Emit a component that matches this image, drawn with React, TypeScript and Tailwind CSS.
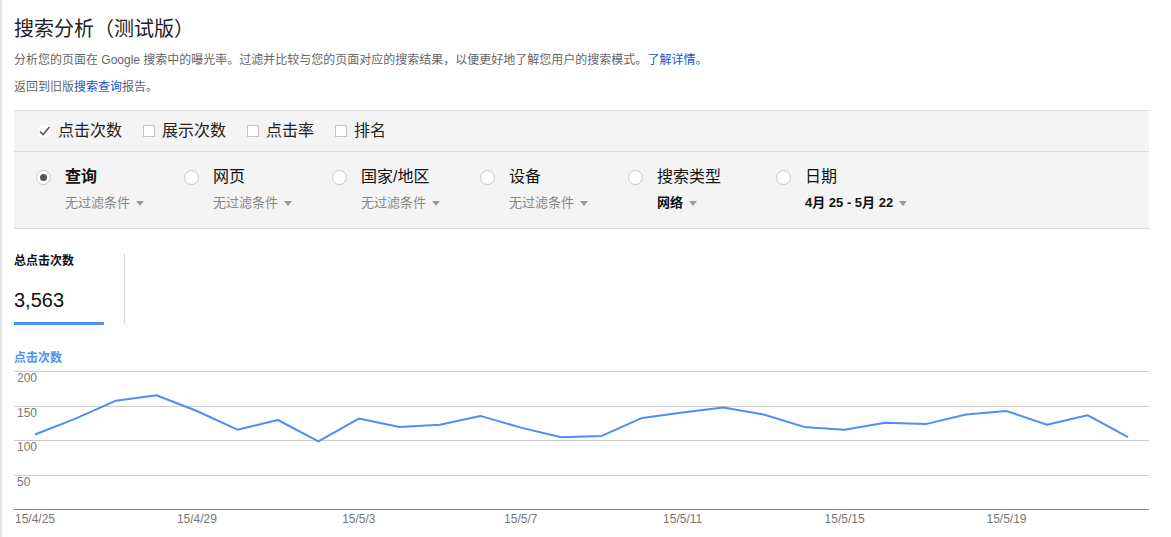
const clicks = [108, 131, 157, 165, 142, 115, 129, 98, 131, 119, 122, 135, 118, 104, 106, 132, 140, 147, 137, 119, 115, 125, 123, 137, 142, 122, 136, 104];
const xLabels = ['15/4/25', '15/4/29', '15/5/3', '15/5/7', '15/5/11', '15/5/15', '15/5/19'];

const metrics = [
  { label: '点击次数', checked: true },
  { label: '展示次数', checked: false },
  { label: '点击率', checked: false },
  { label: '排名', checked: false },
];

const groups = [
  { label: '查询', sub: '无过滤条件', selected: true, strong: false },
  { label: '网页', sub: '无过滤条件', selected: false, strong: false },
  { label: '国家/地区', sub: '无过滤条件', selected: false, strong: false },
  { label: '设备', sub: '无过滤条件', selected: false, strong: false },
  { label: '搜索类型', sub: '网络', selected: false, strong: true },
  { label: '日期', sub: '4月 25 - 5月 22', selected: false, strong: true },
];

function Caret() {
  return <span className="ml-[6px] inline-block h-0 w-0 border-x-[4.5px] border-t-[5px] border-x-transparent border-t-[#999] align-middle" />;
}

function Chart() {
  const step = 40.48;
  const x0 = 21;
  const yOf = (v: number) => 143 - v * 0.69;
  const pts = clicks.map((v, i) => `${(x0 + i * step).toFixed(1)},${yOf(v).toFixed(1)}`).join(' ');
  const grid = [200, 150, 100, 50];

  return (
    <svg width="1135" height="172" className="block">
      {grid.map((g) => (
        <g key={g}>
          <line x1="0" x2="1135" y1={Math.round(yOf(g)) + 0.5} y2={Math.round(yOf(g)) + 0.5} stroke="#cccccc" strokeWidth="1" />
          <text x="3" y={Math.round(yOf(g)) + 11} fontSize="12" fill="#777" fontFamily="'Liberation Sans', Arial, sans-serif">
            {g}
          </text>
        </g>
      ))}
      <line x1="0" x2="1135" y1="143.5" y2="143.5" stroke="#888" strokeWidth="1" />
      {xLabels.map((l, i) => (
        <text
          key={l}
          x={x0 + i * 4 * step}
          y="157"
          fontSize="12"
          fill="#777"
          textAnchor="middle"
          fontFamily="'Liberation Sans', Arial, sans-serif"
        >
          {l}
        </text>
      ))}
      <polyline points={pts} fill="none" stroke="#4d8ff5" strokeWidth="2" strokeLinejoin="round" />
    </svg>
  );
}

export default function App() {
  return (
    <div className="flex min-h-[537px] bg-white font-['Liberation_Sans','Noto_Sans_CJK_SC',sans-serif]">
      <div className="w-[2px] shrink-0 bg-[#e4e4e4]" />
      <div className="flex-1 pl-[12px] pr-[22px]">
        {/* Header */}
        <h1 className="pt-[14px] text-[20px] leading-[30px] font-normal text-[#222]">搜索分析（测试版）</h1>
        <p className="mt-[7px] text-[12px] leading-[18px] text-[#666]">
          分析您的页面在 Google 搜索中的曝光率。过滤并比较与您的页面对应的搜索结果，以便更好地了解您用户的搜索模式。
          <a className="text-[#1155cc]">了解详情</a>。
        </p>
        <p className="mt-[9px] text-[12px] leading-[18px] text-[#666]">
          返回到旧版<a className="text-[#1155cc]">搜索查询</a>报告。
        </p>

        {/* Filter panel */}
        <div className="mt-[14px] border-y border-[#dcdcdc] bg-[#f4f4f4]">
          <div className="flex h-[40px] items-center gap-[21px] pl-[24px] text-[16px] text-[#222]">
            {metrics.map((m) => (
              <label key={m.label} className="flex items-center gap-[7px]">
                {m.checked ? (
                  <svg width="13" height="12" viewBox="0 0 13 12">
                    <rect x="1" y="0.5" width="11" height="11" fill="#fff" />
                    <path d="M2 6.5 L5 9.5 L11.5 2" fill="none" stroke="#555" strokeWidth="1.6" />
                  </svg>
                ) : (
                  <span className="h-[12px] w-[12px] border border-[#c6c6c6] bg-white" />
                )}
                <span>{m.label}</span>
              </label>
            ))}
          </div>
          <div className="flex h-[77px] border-t border-[#dcdcdc] pl-[22px]">
            {groups.map((g) => (
              <div key={g.label} className="w-[148px] pt-[15px]">
                <div className="flex items-center">
                  <span className="flex h-[15px] w-[15px] items-center justify-center rounded-full border border-[#c8c8c8] bg-white">
                    {g.selected && <span className="h-[7px] w-[7px] rounded-full bg-[#555]" />}
                  </span>
                  <span className={`ml-[14px] text-[16px] leading-[20px] text-[#111] ${g.selected ? 'font-bold' : ''}`}>{g.label}</span>
                </div>
                <div
                  className={`ml-[29px] mt-[7px] flex items-center text-[13px] leading-[18px] ${
                    g.strong ? 'font-bold text-[#111]' : 'text-[#888]'
                  }`}
                >
                  {g.sub}
                  <Caret />
                </div>
              </div>
            ))}
          </div>
        </div>

        {/* Totals */}
        <div className="mt-[24px] flex">
          <div className="w-[90px]">
            <div className="text-[12px] font-bold leading-[16px] text-[#111]">总点击次数</div>
            <div className="mt-[19px] text-[20px] leading-[24px] text-[#111]">3,563</div>
            <div className="mt-[10px] h-[3px] bg-[#4d8ff5]" />
          </div>
          <div className="ml-[20px] h-[71px] w-px bg-[#d6d6d6]" />
        </div>

        <div className="mt-[25px] text-[12px] font-bold leading-[16px] text-[#4d8ff5]">点击次数</div>
        <Chart />
      </div>
    </div>
  );
}
